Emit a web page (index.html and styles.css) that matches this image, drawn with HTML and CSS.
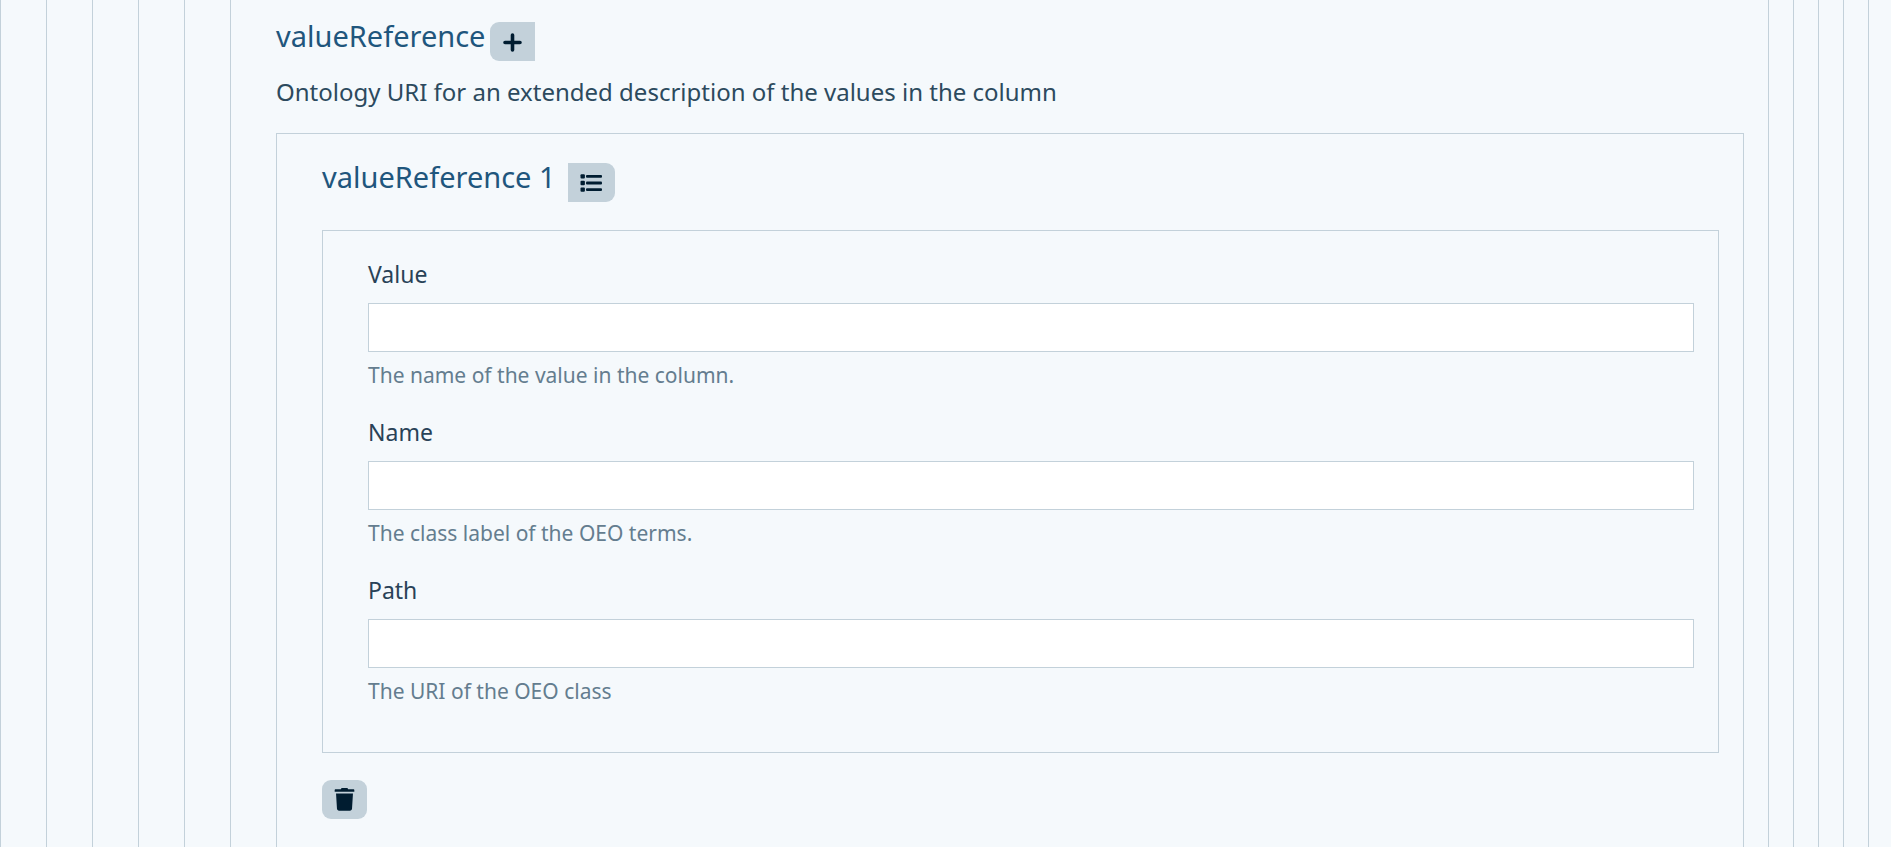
FILE: index.html
```html
<!DOCTYPE html>
<html lang="en">
<head>
<meta charset="utf-8">
<meta name="viewport" content="width=device-width, initial-scale=1">
<title>valueReference</title>
<link rel="stylesheet" href="styles.css">
</head>
<body>
<main class="level level-root">
<div class="level"><div class="level"><div class="level"><div class="level">
<section class="level level-open">
  <header class="heading">
    <h2 class="title">valueReference</h2>
    <button class="btn btn-left" type="button" aria-label="Add item">
      <svg class="icon" viewBox="0 0 21 23" aria-hidden="true"><path d="M10.500 5v15M3 12.500h15" fill="none" stroke="currentColor" stroke-width="3.600" stroke-linecap="round"/></svg>
    </button>
  </header>
  <p class="description">Ontology URI for an extended description of the values in the column</p>
  <div class="level item">
    <header class="heading heading-item">
      <h3 class="title">valueReference 1</h3>
      <button class="btn btn-right" type="button" aria-label="Item properties">
        <svg class="icon icon-wide" viewBox="0 0 23 23" aria-hidden="true"><g fill="currentColor"><rect x="0.500" y="3.200" width="4.400" height="4.400" rx="1"/><rect x="0.500" y="9.800" width="4.400" height="4.400" rx="1"/><rect x="0.500" y="16.400" width="4.400" height="4.400" rx="1"/><rect x="6" y="4" width="16" height="2.800" rx="1"/><rect x="6" y="10.600" width="16" height="2.800" rx="1"/><rect x="6" y="17.200" width="16" height="2.800" rx="1"/></g></svg>
      </button>
    </header>
    <form class="level fields">
      <div class="field">
        <label class="label" for="value">Value</label>
        <input class="input" id="value" type="text" aria-describedby="value-help">
        <p class="help" id="value-help">The name of the value in the column.</p>
      </div>
      <div class="field">
        <label class="label" for="name">Name</label>
        <input class="input" id="name" type="text" aria-describedby="name-help">
        <p class="help" id="name-help">The class label of the OEO terms.</p>
      </div>
      <div class="field">
        <label class="label" for="path">Path</label>
        <input class="input" id="path" type="text" aria-describedby="path-help">
        <p class="help" id="path-help">The URI of the OEO class</p>
      </div>
    </form>
    <button class="btn btn-delete" type="button" aria-label="Delete item">
      <svg class="icon" viewBox="0 0 20 22" aria-hidden="true"><path d="M6.500 1.200 7.200 0h5.600l.7 1.200h5c.5 0 .9.400.9.900v1.500H.6V2.100c0-.5.400-.9.900-.9zM1.900 5.300h16.200l-.9 14.600c-.1 1.100-.9 1.800-2 1.800H4.800c-1.100 0-1.900-.7-2-1.800z" fill="currentColor"/></svg>
    </button>
  </div>
</section>
</div></div></div></div>
</main>
</body>
</html>
```
FILE: styles.css
```css
* { box-sizing: border-box; }

body {
  margin: 0;
  background: #f5f9fc;
  color: #2c4a5e;
  font-family: "Segoe UI", "Noto Sans", "Open Sans", sans-serif;
  font-size: 23px;
  line-height: 36px;
}

.level {
  display: flex;
  flex-direction: column;
  flex: 1;
  border: 0 solid #c3d1da;
  border-width: 0 1px;
  padding: 0 24px 0 45px;
}

.level-root {
  min-height: 100vh;
  border-right: 0;
  padding-right: 22px;
}

.level-open { padding-top: 17px; }

.heading {
  display: flex;
  align-items: flex-start;
  gap: 5px;
  margin-bottom: 13px;
}

.heading-item {
  gap: 12px;
  margin-bottom: 28px;
}

.title {
  margin: 0;
  color: #1f567d;
  font-size: 29px;
  font-weight: 400;
  line-height: 38px;
}

.description {
  margin: 0 0 23px;
  font-size: 24px;
}

.item {
  border-top-width: 1px;
  padding-top: 24px;
}

.fields {
  flex: none;
  border-width: 1px;
  padding-top: 25px;
  padding-bottom: 22px;
}

.field {
  display: flex;
  flex-direction: column;
  margin-bottom: 23px;
}

.label {
  align-self: flex-start;
  margin-bottom: 11px;
  color: #294257;
}

.input {
  width: 100%;
  height: 49px;
  border: 1px solid #c3d1da;
  border-radius: 0;
  padding: 6px 12px;
  background: #fff;
  color: inherit;
  font: inherit;
}

.help {
  margin: 7px 0 0;
  color: #647d8f;
  font-size: 21px;
  line-height: 32px;
}

.btn {
  display: flex;
  align-items: center;
  justify-content: center;
  margin: 5px 0 0;
  border: 0;
  border-radius: 9px;
  padding: 8px 12px;
  background: #c3d1da;
  color: #001c30;
}

.btn-left { border-radius: 9px 0 0 9px; }
.btn-right { border-radius: 0 9px 9px 0; }

.btn-delete {
  align-self: flex-start;
  margin-top: 27px;
}

.icon {
  display: block;
  width: 21px;
  height: 23px;
}

.icon-wide { width: 23px; }
```
